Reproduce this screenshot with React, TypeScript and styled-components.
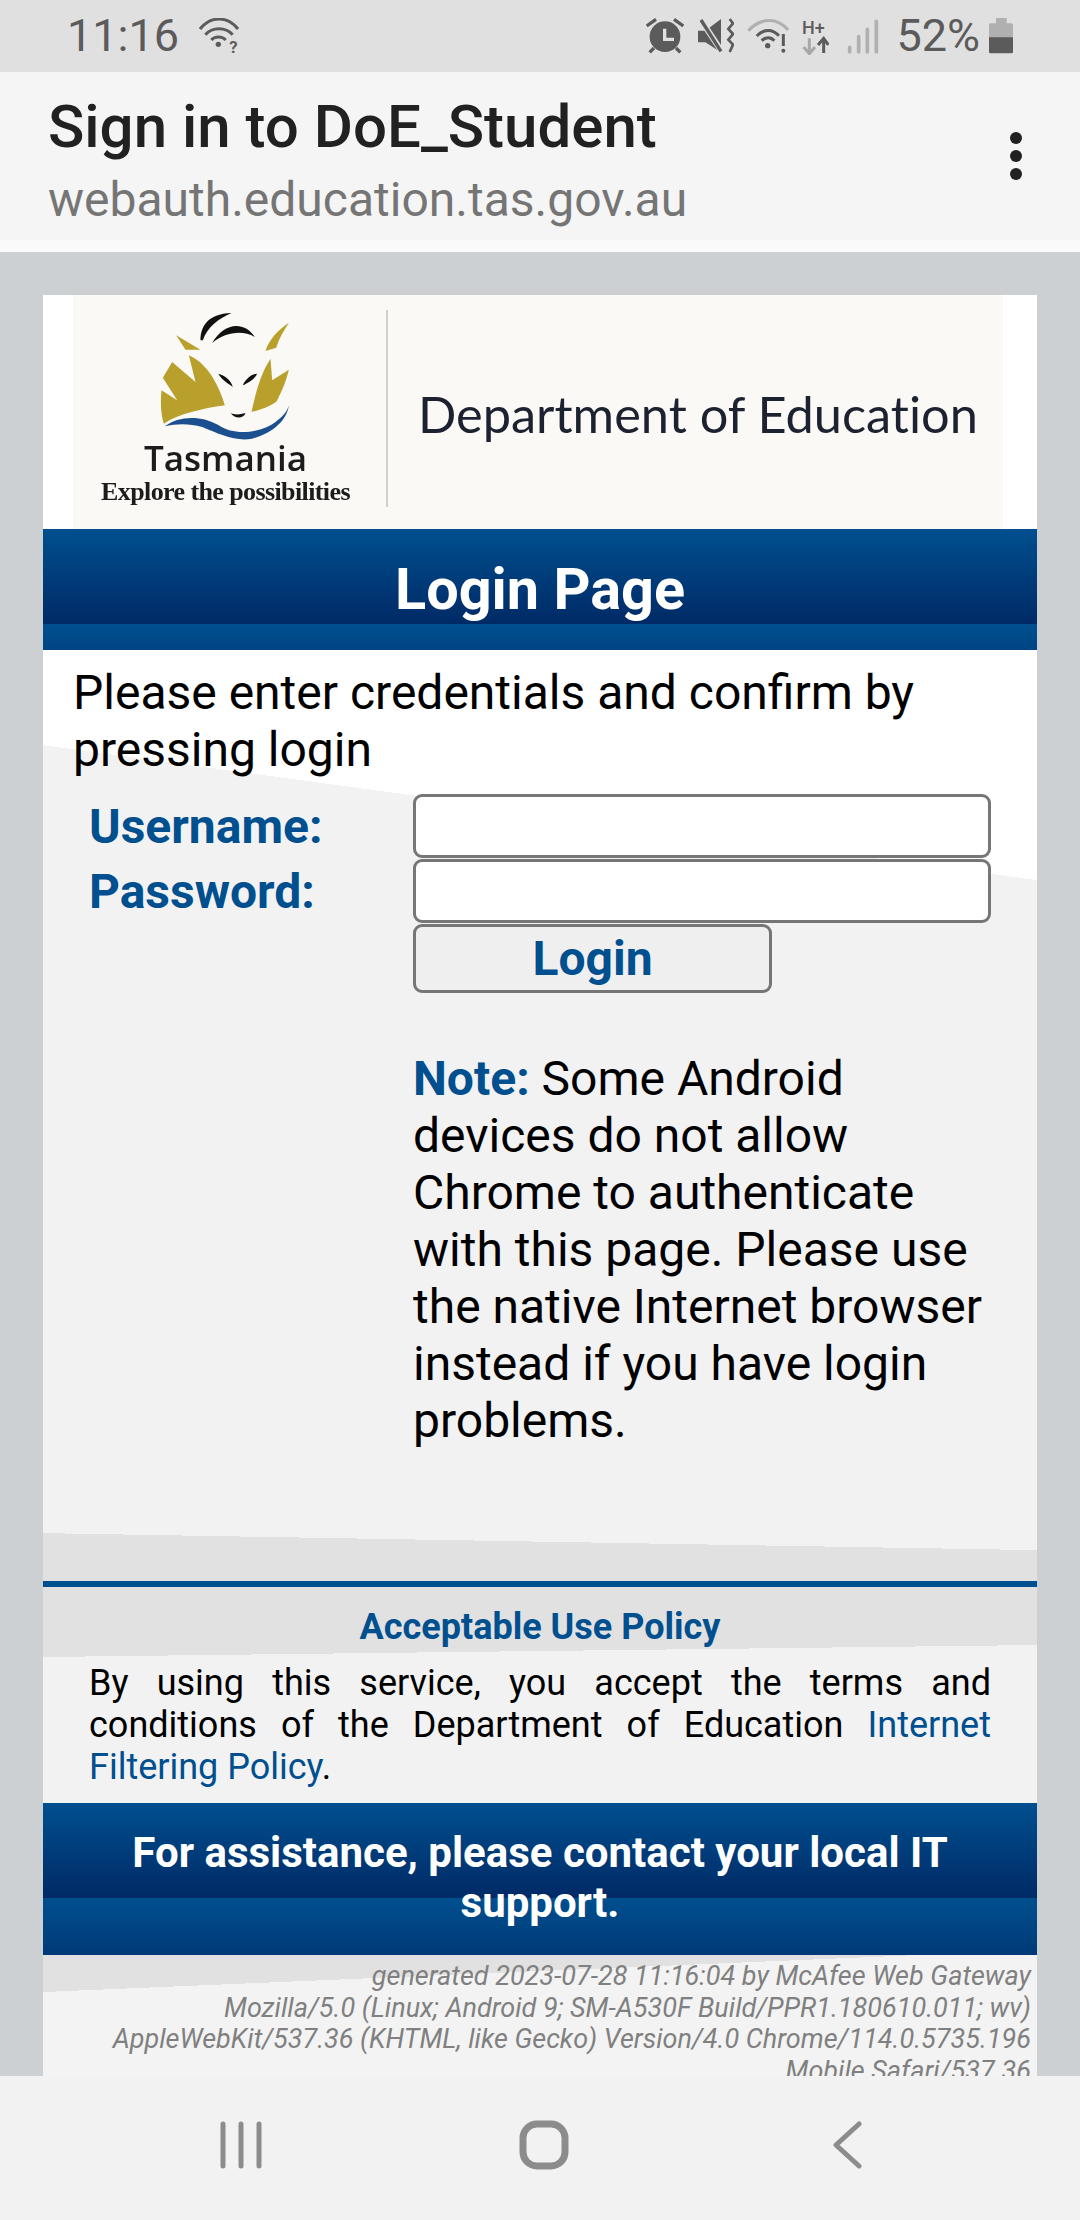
import styled, { createGlobalStyle } from 'styled-components';

const GlobalStyle = createGlobalStyle`
  html, body {
    margin: 0;
    padding: 0;
    background: #ccd0d3;
  }

  * {
    box-sizing: border-box;
  }
`;

const Screen = styled.div`
  font-family: Roboto, 'Liberation Sans', sans-serif;
  flex-direction: column;
  overflow: hidden;
  display: flex;
  height: 2220px;
  width: 1080px;
`;

const StatusBar = styled.div`
  justify-content: space-between;
  background: #e0e0e0;
  align-items: center;
  padding: 0 67px 0 67px;
  font-size: 45px;
  flex: 0 0 72px;
  color: #5b5b5b;
  display: flex;
`;

const StatusGroup = styled.div`
  align-items: center;
  display: flex;
`;

const StatusIcon = styled.svg<{ $gap?: number }>`
  margin-left: ${props => props.$gap ?? 0}px;
  display: block;
`;

const StatusText = styled.span<{ $gap?: number }>`
  margin-left: ${props => props.$gap ?? 0}px;
  line-height: 72px;
`;

const AppBar = styled.header`
  border-bottom: 12px solid #fafafa;
  justify-content: space-between;
  background: #f5f5f5;
  align-items: center;
  padding: 0 58px 0 48px;
  flex: 0 0 180px;
  display: flex;
`;

const AppBarText = styled.div`
  padding-top: 14px;
`;

const AppBarTitle = styled.div`
  font-weight: 500;
  line-height: 68px;
  font-size: 60px;
  color: #212121;
`;

const AppBarUrl = styled.div`
  margin-top: 6px;
  line-height: 66px;
  font-size: 48px;
  color: #757575;
`;

const MenuDots = styled.div`
  flex-direction: column;
  display: flex;
  gap: 6px;
`;

const MenuDot = styled.span`
  background: #212121;
  border-radius: 50%;
  height: 12px;
  width: 12px;
`;

const Viewport = styled.main`
  padding: 43px 43px 0 43px;
  background: #ccd0d3;
  overflow: hidden;
  flex: 1 1 auto;
`;

const Card = styled.div`
  background: #fff;
`;

const LogoStrip = styled.div`
  background: #faf9f6;
  align-items: flex-start;
  margin: 0 34px 0 30px;
  display: flex;
  height: 234px;
`;

const Brand = styled.div`
  flex-direction: column;
  align-items: center;
  padding-top: 12px;
  display: flex;
  width: 305px;
`;

const BrandName = styled.div`
  font-family: 'Open Sans', sans-serif;
  font-weight: 600;
  margin-top: -7px;
  line-height: 36px;
  font-size: 35px;
  color: #1c1c1c;
  filter: blur(0.6px);
`;

const BrandTagline = styled.div`
  font-family: 'Liberation Serif', serif;
  letter-spacing: -0.6px;
  font-weight: bold;
  white-space: nowrap;
  margin-top: 3px;
  line-height: 26px;
  font-size: 26px;
  color: #1c1c1c;
  filter: blur(0.7px);
`;

const LogoDivider = styled.div`
  background: #cfcfcd;
  margin: 15px 30px 0 8px;
  height: 197px;
  width: 2px;
`;

const DepartmentName = styled.div`
  font-family: Lato, sans-serif;
  font-variant-ligatures: none;
  white-space: nowrap;
  padding-top: 92px;
  line-height: 54px;
  font-size: 50.5px;
  color: #1d2230;
  filter: blur(0.5px);
`;

const BlueBanner = styled.div<{ $size: number; $lineHeight: number; $height: number; $pad: number }>`
  background: linear-gradient(#004f8f, #002a66) 0 0 / 100% 95px repeat;
  line-height: ${props => props.$lineHeight}px;
  padding-top: ${props => props.$pad}px;
  height: ${props => props.$height}px;
  font-size: ${props => props.$size}px;
  font-weight: bold;
  text-align: center;
  color: #fff;
`;

const FormSection = styled.section`
  background:
    linear-gradient(180.98deg, transparent 900px, #e1e1e1 900px),
    linear-gradient(187.73deg, #fff 228px, #f2f2f2 228px);
  border-bottom: 6px solid #004f8f;
  padding: 14px 46px 0 30px;
  height: 937px;
`;

const IntroText = styled.p`
  line-height: 57px;
  font-size: 48px;
  color: #000;
  margin: 0;
`;

const LoginGrid = styled.div`
  grid-template-columns: 324px 578px;
  margin: 16px 0 0 16px;
  display: grid;
  row-gap: 1px;
`;

const FieldLabel = styled.label`
  padding-top: 2px;
  font-weight: bold;
  line-height: 62px;
  font-size: 48px;
  color: #004f8f;
`;

const TextField = styled.input`
  border: 3px solid #767676;
  border-radius: 9px;
  background: #fff;
  display: block;
  height: 64px;
  width: 578px;
`;

const LoginButton = styled.button`
  grid-column: 2;
  border: 3px solid #767676;
  border-radius: 9px;
  background: #efefef;
  font-family: inherit;
  font-weight: bold;
  font-size: 48px;
  color: #004f8f;
  padding: 0;
  height: 69px;
  width: 359px;
`;

const NoteText = styled.p`
  grid-column: 2;
  margin: 56px 0 0 0;
  line-height: 57px;
  font-size: 48px;
  color: #000;
`;

const NoteLabel = styled.strong`
  color: #004f8f;
`;

const PolicySection = styled.section`
  background: linear-gradient(179.31deg, #e1e1e1 70px, #f2f2f2 70px);
  padding: 0 46px 0 46px;
  height: 216px;
`;

const PolicyTitle = styled.h2`
  padding-top: 18px;
  font-weight: bold;
  text-align: center;
  line-height: 44px;
  font-size: 36px;
  color: #004f8f;
  margin: 0;
`;

const PolicyText = styled.p`
  text-align: justify;
  line-height: 42px;
  margin: 13px 0 0 0;
  font-size: 36px;
  color: #000;
`;

const PolicyLink = styled.a`
  text-decoration: none;
  color: #004f8f;
`;

const GeneratedBlock = styled.div`
  background: linear-gradient(177.58deg, #e1e1e1 37px, #f3f3f3 37px);
  padding: 6px 6px 20px 40px;
  font-style: italic;
  text-align: right;
  line-height: 31.7px;
  font-size: 27px;
  color: #808080;
`;

const NavBar = styled.nav`
  background: #f2f2f2;
  align-items: center;
  padding: 0 0 6px 218px;
  flex: 0 0 144px;
  display: flex;
`;

const NavIcon = styled.svg<{ $gap: number }>`
  margin-left: ${props => props.$gap}px;
  display: block;
  fill: none;
  stroke: #8c8c8c;
`;

// Tasmania emblem, coordinates follow the reference at 3x
const TasmaniaEmblem = () => (
  <svg width={147} height={140} viewBox="340 50 440 420">
    <g fill="#111">
      <path d="M485 150C485 110 505 70 578 68C540 85 505 110 492 150Z" />
      <path d="M520 158C550 105 610 85 648 140C610 118 560 125 520 158Z" />
      <path d="M538 250C555 255 575 265 582 290C570 280 550 270 538 250Z" />
      <path d="M655 250C640 250 620 265 612 285C625 278 645 270 655 250Z" />
      <path d="M575 368C590 375 605 372 620 368C615 384 590 388 575 368Z" />
    </g>
    <g fill="#b9a02c">
      <path d="M412 135L485 178L440 178Z" />
      <path d="M750 97C715 120 690 150 680 182L712 172C720 145 735 120 750 97Z" />
      <path d="M450 195C500 215 540 280 558 345C490 355 420 370 375 400C365 370 365 330 368 300L415 330L372 262L400 215L470 275Z" />
      <path d="M695 205L700 270L750 238C740 280 725 310 712 335C690 350 660 360 638 365C650 310 665 250 695 205Z" />
    </g>
    <path
      fill="#1c4f8f"
      d="M378 408C420 375 490 375 540 405C590 440 670 425 710 395C730 380 745 365 750 345C745 390 700 430 640 445C590 455 540 430 490 410C450 398 410 400 378 408Z"
    />
  </svg>
);

const WifiQuestionIcon = () => (
  <StatusIcon $gap={20} width={40} height={36} viewBox="475 52 120 108">
    <g fill="none" stroke="#5b5b5b" strokeWidth={9}>
      <path d="M478 85C510 45 560 45 592 85" />
      <path d="M494 102C515 78 555 78 576 102" />
      <path d="M512 118C522 106 545 106 555 118" />
    </g>
    <circle cx={533} cy={131} r={8} fill="#5b5b5b" />
    <text x={566} y={157} fontSize={50} fontWeight={700} fill="#5b5b5b">?</text>
  </StatusIcon>
);

const AlarmIcon = () => (
  <StatusIcon width={38} height={36} viewBox="88 52 114 108">
    <g stroke="#5b5b5b" strokeWidth={10} fill="none">
      <path d="M90 76L118 56" />
      <path d="M172 56L200 76" />
      <path d="M99 155L112 142" />
      <path d="M191 155L178 142" />
    </g>
    <circle cx={145} cy={108} r={46} fill="#5b5b5b" />
    <path d="M144 84V116H172" fill="none" stroke="#e0e0e0" strokeWidth={10} />
  </StatusIcon>
);

const MuteIcon = () => (
  <StatusIcon $gap={14} width={36} height={36} viewBox="243 52 108 108">
    <path d="M243 90H265L312 55V155L265 125H243Z" fill="#5b5b5b" />
    <path d="M248 52L318 158" stroke="#e0e0e0" strokeWidth={18} />
    <path d="M252 58L312 152" stroke="#5b5b5b" strokeWidth={10} />
    <path d="M338 55L348 68L334 85L348 100L334 117L348 132L338 154" fill="none" stroke="#5b5b5b" strokeWidth={8} />
  </StatusIcon>
);

const WifiAlertIcon = () => (
  <StatusIcon $gap={13} width={42} height={36} viewBox="389 52 126 108">
    <path d="M393 90C430 50 480 50 512 88" fill="none" stroke="#b0b0b0" strokeWidth={9} />
    <g fill="none" stroke="#5b5b5b" strokeWidth={9}>
      <path d="M418 106C440 84 465 84 485 105" />
      <path d="M433 120C445 108 460 108 471 120" />
    </g>
    <circle cx={451} cy={135} r={8} fill="#5b5b5b" />
    <path d="M498 100V136" stroke="#5b5b5b" strokeWidth={9} />
    <circle cx={498} cy={150} r={6} fill="#5b5b5b" />
  </StatusIcon>
);

const NetworkIcon = () => (
  <StatusIcon $gap={13} width={27} height={38} viewBox="555 50 81 114">
    <text x={555} y={100} fontSize={54} fontWeight={500} fill="#5b5b5b">H+</text>
    <path d="M577 114V158M560 140L577 160L594 140" fill="none" stroke="#a8a8a8" strokeWidth={9} />
    <path d="M620 158V116M603 134L620 114L634 134" fill="none" stroke="#5b5b5b" strokeWidth={9} />
  </StatusIcon>
);

const SignalIcon = () => (
  <StatusIcon $gap={18} width={32} height={36} viewBox="690 52 96 108">
    <g stroke="#b0b0b0" strokeWidth={11} strokeLinecap="round">
      <path d="M698 140V154" />
      <path d="M725 108V154" />
      <path d="M751 86V154" />
      <path d="M778 62V154" />
    </g>
  </StatusIcon>
);

const BatteryIcon = () => (
  <StatusIcon $gap={9} width={24} height={36} viewBox="1107 52 72 108">
    <path d="M1128 52H1160V68H1174Q1179 68 1179 73V112H1107V73Q1107 68 1112 68H1128Z" fill="#b0b0b0" />
    <path d="M1107 110H1179V153Q1179 158 1174 158H1112Q1107 158 1107 153Z" fill="#5b5b5b" />
  </StatusIcon>
);

const App = (): JSX.Element => (
  <Screen>
    <GlobalStyle />
    <StatusBar>
      <StatusGroup>
        <StatusText>11:16</StatusText>
        <WifiQuestionIcon />
      </StatusGroup>
      <StatusGroup>
        <AlarmIcon />
        <MuteIcon />
        <WifiAlertIcon />
        <NetworkIcon />
        <SignalIcon />
        <StatusText $gap={17}>52%</StatusText>
        <BatteryIcon />
      </StatusGroup>
    </StatusBar>
    <AppBar>
      <AppBarText>
        <AppBarTitle>Sign in to DoE_Student</AppBarTitle>
        <AppBarUrl>webauth.education.tas.gov.au</AppBarUrl>
      </AppBarText>
      <MenuDots>
        <MenuDot />
        <MenuDot />
        <MenuDot />
      </MenuDots>
    </AppBar>
    <Viewport>
      <Card>
        <LogoStrip>
          <Brand>
            <TasmaniaEmblem />
            <BrandName>Tasmania</BrandName>
            <BrandTagline>Explore the possibilities</BrandTagline>
          </Brand>
          <LogoDivider />
          <DepartmentName>Department of Education</DepartmentName>
        </LogoStrip>
        <BlueBanner $size={57.6} $lineHeight={66} $height={121} $pad={28}>
          Login Page
        </BlueBanner>
        <FormSection>
          <IntroText>Please enter credentials and confirm by pressing login</IntroText>
          <LoginGrid>
            <FieldLabel htmlFor="username">Username:</FieldLabel>
            <TextField id="username" type="text" />
            <FieldLabel htmlFor="password">Password:</FieldLabel>
            <TextField id="password" type="password" />
            <LoginButton type="button">Login</LoginButton>
            <NoteText>
              <NoteLabel>Note:</NoteLabel> Some Android devices do not allow Chrome to
              authenticate with this page. Please use the native Internet browser instead
              if you have login problems.
            </NoteText>
          </LoginGrid>
        </FormSection>
        <PolicySection>
          <PolicyTitle>Acceptable Use Policy</PolicyTitle>
          <PolicyText>
            By using this service, you accept the terms and conditions of the Department
            of Education <PolicyLink href="#policy">Internet Filtering Policy</PolicyLink>.
          </PolicyText>
        </PolicySection>
        <BlueBanner $size={42} $lineHeight={50} $height={152} $pad={25}>
          For assistance, please contact your local IT<br />support.
        </BlueBanner>
        <GeneratedBlock>
          generated 2023-07-28 11:16:04 by McAfee Web Gateway
          <br />
          Mozilla/5.0 (Linux; Android 9; SM-A530F Build/PPR1.180610.011; wv)
          AppleWebKit/537.36 (KHTML, like Gecko) Version/4.0 Chrome/114.0.5735.196
          Mobile Safari/537.36
        </GeneratedBlock>
      </Card>
    </Viewport>
    <NavBar>
      <NavIcon $gap={0} width={46} height={48} viewBox="0 0 46 48" strokeWidth={5} strokeLinecap="round">
        <path d="M5 3V45M23 3V45M41 3V45" />
      </NavIcon>
      <NavIcon $gap={255} width={50} height={50} viewBox="0 0 50 50" strokeWidth={7}>
        <rect x={4} y={4} width={42} height={42} rx={14} />
      </NavIcon>
      <NavIcon $gap={263} width={30} height={48} viewBox="0 0 30 48" strokeWidth={5} strokeLinecap="round" strokeLinejoin="round">
        <path d="M27 3L4 24L27 45" />
      </NavIcon>
    </NavBar>
  </Screen>
);

export default App;
